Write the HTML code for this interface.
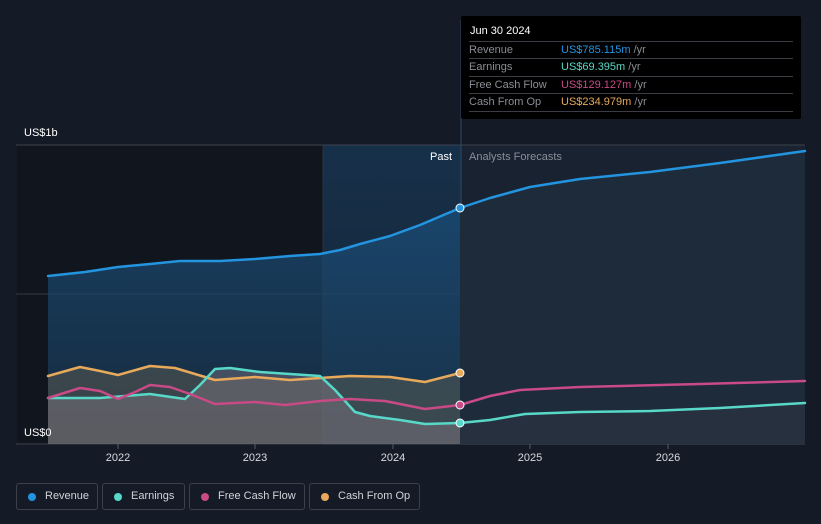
<!DOCTYPE html><html><head><style>
body{margin:0;width:821px;height:524px;background:#151b26;font-family:"Liberation Sans",sans-serif;overflow:hidden;position:relative}
.tt{position:absolute;left:461px;top:16px;width:340px;height:103px;background:#000;border-radius:2px}
.tt .h{color:#fff;font-size:11px;position:absolute;left:9px;top:9px}
.row{position:absolute;left:8px;width:324px;height:17px;border-top:1px solid #3a3d44;font-size:11px;color:#8a8d94}
.row span{position:absolute;left:92px;top:2px}.row b{font-weight:normal}
.row .l{position:absolute;left:0;top:2px}
.leg{position:absolute;top:483px;height:27px;border:1px solid #3b404a;border-radius:3px;box-sizing:border-box;color:#d0d3d8;font-size:11px;line-height:25px}
.leg i{position:absolute;left:11px;top:9px;width:8px;height:8px;border-radius:50%}
.leg span{position:absolute;left:28px}
</style></head><body>
<svg width="821" height="524" style="position:absolute;left:0;top:0">
<defs>
<linearGradient id="rv" x1="0" y1="0" x2="0" y2="1"><stop offset="0" stop-color="#1a4d78" stop-opacity=".75"/><stop offset="1" stop-color="#1a3a55" stop-opacity=".6"/></linearGradient>
<linearGradient id="pg" x1="0" y1="0" x2="0" y2="1"><stop offset="0" stop-color="#17304a"/><stop offset="1" stop-color="#152433"/></linearGradient>
</defs>
<rect x="17" y="145" width="306" height="300" fill="#11151d"/>
<rect x="323" y="145" width="138" height="300" fill="url(#pg)"/>
<rect x="461" y="145" width="344" height="300" fill="#182231"/>
<line x1="16" y1="145" x2="805" y2="145" stroke="#3d434d"/>
<line x1="16" y1="294" x2="805" y2="294" stroke="#333944"/>
<line x1="16" y1="444" x2="805" y2="444" stroke="#3d434d"/>
<line x1="323" y1="145" x2="323" y2="444" stroke="#2a3442"/>
<line x1="461" y1="20" x2="461" y2="444" stroke="#2d4a66"/>
<path d="M48,276 85,272 118,267 150,264 180,261 220,261 255,259 290,256 320,254 340,250 360,244 390,236 420,225 460,208 L460,444 48,444Z" fill="url(#rv)"/>
<path d="M460,208 490,198 530,187 580,179 650,172 720,163 805,151 L805,444 460,444Z" fill="#1e2b3a"/>
<path d="M48,376 80,367 100,371 118,375 150,366 175,368 195,374 215,380 255,377 290,380 320,378 350,376 390,377 425,382 460,373 L460,444 48,444Z" fill="#8a7a5a" fill-opacity=".3"/>
<path d="M48,398 100,398 150,394 185,399 200,385 215,369 230,368 260,372 290,374 320,376 335,390 355,412 370,416 400,420 425,424 460,423 L460,444 48,444Z" fill="#9a8a95" fill-opacity=".35"/>
<path d="M460,423 490,420 525,414 580,412 650,411 720,408 805,403 L805,444 460,444Z" fill="#2a3340" fill-opacity=".7"/>
<g fill="none" stroke-width="2.5" stroke-linejoin="round" stroke-linecap="round">
<polyline stroke="#2394df" points="48,276 85,272 118,267 150,264 180,261 220,261 255,259 290,256 320,254 340,250 360,244 390,236 420,225 460,208 490,198 530,187 580,179 650,172 720,163 805,151"/>
<polyline stroke="#e8a95a" points="48,376 80,367 100,371 118,375 150,366 175,368 195,374 215,380 255,377 290,380 320,378 350,376 390,377 425,382 460,373"/>
<polyline stroke="#58d8c8" points="48,398 100,398 150,394 185,399 200,385 215,369 230,368 260,372 290,374 320,376 335,390 355,412 370,416 400,420 425,424 460,423 490,420 525,414 580,412 650,411 720,408 805,403"/>
<polyline stroke="#c84a86" points="48,398 80,388 100,391 118,399 135,392 150,385 170,387 190,394 215,404 255,402 285,405 320,401 350,399 385,401 405,405 425,409 460,405 490,396 520,390 580,387 700,384 805,381"/>
</g>
<g stroke="#fff" stroke-width="1">
<circle cx="460" cy="208" r="4" fill="#2394df"/><circle cx="460" cy="373" r="4" fill="#e8a95a"/>
<circle cx="460" cy="405" r="4" fill="#c84a86"/><circle cx="460" cy="423" r="4" fill="#58d8c8"/>
</g>
<g font-size="11" fill="#fff"><text x="24" y="136">US$1b</text><text x="24" y="436">US$0</text>
<text x="430" y="160">Past</text><text x="469" y="160" fill="#8a8f98">Analysts Forecasts</text>
<g fill="#d8dadf" text-anchor="middle"><text x="118" y="461">2022</text><text x="255" y="461">2023</text><text x="393" y="461">2024</text><text x="530" y="461">2025</text><text x="668" y="461">2026</text></g></g>
<g stroke="#555b66"><line x1="118" y1="444" x2="118" y2="449"/><line x1="255" y1="444" x2="255" y2="449"/><line x1="393" y1="444" x2="393" y2="449"/><line x1="530" y1="444" x2="530" y2="449"/><line x1="668" y1="444" x2="668" y2="449"/></g>
</svg>
<div class="tt"><div class="h">Jun 30 2024</div>
<div class="row" style="top:25px"><span class="l">Revenue</span><span><b style="color:#2394df">US$785.115m</b> /yr</span></div>
<div class="row" style="top:42px"><span class="l">Earnings</span><span><b style="color:#58d8c8">US$69.395m</b> /yr</span></div>
<div class="row" style="top:60px"><span class="l">Free Cash Flow</span><span><b style="color:#c84a86">US$129.127m</b> /yr</span></div>
<div class="row" style="top:77px"><span class="l">Cash From Op</span><span><b style="color:#e8a95a">US$234.979m</b> /yr</span></div>
<div class="row" style="top:95px;height:0"></div>
</div>
<div class="leg" style="left:16px;width:82px"><i style="background:#2394df"></i><span>Revenue</span></div>
<div class="leg" style="left:102px;width:83px"><i style="background:#58d8c8"></i><span>Earnings</span></div>
<div class="leg" style="left:189px;width:116px"><i style="background:#c84a86"></i><span>Free Cash Flow</span></div>
<div class="leg" style="left:309px;width:111px"><i style="background:#e8a95a"></i><span>Cash From Op</span></div>
</body></html>
